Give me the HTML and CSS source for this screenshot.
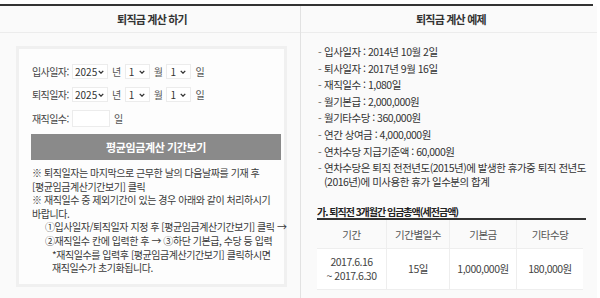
FILE: index.html
```html
<!DOCTYPE html>
<html lang="ko">
<head>
    <meta charset="UTF-8">
    <meta name="viewport" content="width=device-width, initial-scale=1.0">
    <title>퇴직금 계산</title>
    <link rel="stylesheet" href="styles.css">
</head>
<body>
    <div class="board">
        <section class="col col-left">
            <h2 class="col-head">퇴직금 계산 하기</h2>
            <div class="col-body">
                <div class="calc-box">
                    <div class="field-row">
                        <span class="label">입사일자:</span>
                        <span class="sel sel-year">2025<svg viewBox="0 0 8 5"><path d="M1 1l3 3 3-3"/></svg></span>
                        <span class="unit">년</span>
                        <span class="sel">1<svg viewBox="0 0 8 5"><path d="M1 1l3 3 3-3"/></svg></span>
                        <span class="unit">월</span>
                        <span class="sel">1<svg viewBox="0 0 8 5"><path d="M1 1l3 3 3-3"/></svg></span>
                        <span class="unit">일</span>
                    </div>
                    <div class="field-row">
                        <span class="label">퇴직일자:</span>
                        <span class="sel sel-year">2025<svg viewBox="0 0 8 5"><path d="M1 1l3 3 3-3"/></svg></span>
                        <span class="unit">년</span>
                        <span class="sel">1<svg viewBox="0 0 8 5"><path d="M1 1l3 3 3-3"/></svg></span>
                        <span class="unit">월</span>
                        <span class="sel">1<svg viewBox="0 0 8 5"><path d="M1 1l3 3 3-3"/></svg></span>
                        <span class="unit">일</span>
                    </div>
                    <div class="field-row">
                        <span class="label">재직일수:</span>
                        <input class="days-input" type="text">
                        <span class="unit">일</span>
                    </div>
                    <button class="period-btn">평균임금계산 기간보기</button>
                    <div class="notes">
                        <p>※ 퇴직일자는 마지막으로 근무한 날의 다음날짜를 기재 후<br>[평균임금계산기간보기] 클릭</p>
                        <p>※ 재직일수 중 제외기간이 있는 경우 아래와 같이 처리하시기<br>바랍니다.</p>
                        <p class="step">①입사일자/퇴직일자 지정 후 [평균임금계산기간보기] 클릭 →<br>②재직일수 칸에 입력한 후 → ③하단 기본급, 수당 등 입력</p>
                        <p class="star">*재직일수를 입력후 [평균임금계산기간보기] 클릭하시면<br>재직일수가 초기화됩니다.</p>
                    </div>
                </div>
            </div>
        </section>

        <section class="col col-right">
            <h2 class="col-head">퇴직금 계산 예제</h2>
            <div class="col-body">
                <ul class="example-list">
                    <li>입사일자 : 2014년 10월 2일</li>
                    <li>퇴사일자 : 2017년 9월 16일</li>
                    <li>재직일수 : 1,080일</li>
                    <li>월기본급 : 2,000,000원</li>
                    <li>월기타수당 : 360,000원</li>
                    <li>연간 상여금 : 4,000,000원</li>
                    <li>연차수당 지급기준액 : 60,000원</li>
                    <li>연차수당은 퇴직 전전년도(2015년)에 발생한 휴가중 퇴직 전년도<br>(2016년)에 미사용한 휴가 일수분의 합계</li>
                </ul>

                <h3 class="sub-title">가. 퇴직전 3개월간 임금총액(세전금액)</h3>
                <table class="wage-table">
                    <thead>
                        <tr>
                            <th>기간</th>
                            <th>기간별일수</th>
                            <th>기본금</th>
                            <th>기타수당</th>
                        </tr>
                    </thead>
                    <tbody>
                        <tr>
                            <td>2017.6.16<br>~ 2017.6.30</td>
                            <td>15일</td>
                            <td>1,000,000원</td>
                            <td>180,000원</td>
                        </tr>
                    </tbody>
                </table>
            </div>
        </section>
    </div>
</body>
</html>
```

FILE: styles.css
```css
body {
    margin: 0;
    background: #fff;
    font-family: "Noto Sans CJK KR", "Noto Sans", sans-serif;
    color: #333;
    font-size: 10.5px;
    letter-spacing: -0.5px;
    overflow: hidden;
}

.board {
    width: 593px;
    margin-top: 4px;
    border-top: 2px solid #333;
    display: grid;
    grid-template-columns: 301px 1fr;
    height: 300px;
}

.col {
    background: #fafafa;
}

.col-left {
    border-right: 1px solid #e2e2e2;
}

.col-head {
    margin: 0;
    height: 26px;
    line-height: 26px;
    text-align: center;
    font-size: 11px;
    font-weight: 700;
    letter-spacing: -0.8px;
    color: #333;
    border-bottom: 1px solid #ececec;
    padding-left: 4px;
}

/* left: calculator */
.col-left .col-body {
    padding: 13px 13px 0 16px;
}

.calc-box {
    border: 3px solid #f0f0f0;
    background: #fdfdfd;
    padding: 15px 2px 9px 13px;
}

.field-row {
    display: flex;
    align-items: center;
    height: 15px;
    margin-bottom: 8px;
    white-space: nowrap;
}

.field-row:nth-child(3) {
    height: 17px;
    margin-bottom: 7px;
}

.label {
    flex-shrink: 0;
    width: 40px;
    color: #444;
    font-size: 10px;
    letter-spacing: -0.6px;
}

.sel {
    display: flex;
    align-items: center;
    justify-content: space-between;
    box-sizing: border-box;
    width: 25px;
    height: 15px;
    padding: 0 4px 0 3px;
    border: 1px solid #ececec;
    background: #fff;
    color: #333;
    font-size: 10px;
    letter-spacing: 0;
}

.sel-year {
    width: 36px;
    padding-left: 2px;
    padding-right: 3px;
}

.sel svg {
    width: 6px;
    height: 4px;
    fill: none;
    stroke: #333;
    stroke-width: 1.8;
}

.unit {
    margin: 0 4px;
    color: #555;
    font-size: 10px;
}

.days-input {
    box-sizing: border-box;
    width: 38px;
    height: 17px;
    border: 1px solid #ececec;
    background: #fff;
    margin: 0;
    padding: 0;
}

.period-btn {
    display: block;
    width: 250px;
    height: 26px;
    margin-left: -1px;
    border: none;
    background: #8a8a8a;
    color: #fff;
    font-family: inherit;
    font-size: 11px;
    font-weight: 700;
    letter-spacing: -0.4px;
}

.notes {
    margin-top: 6px;
    line-height: 13.6px;
    color: #3a3a3a;
    font-size: 10px;
    letter-spacing: -0.45px;
}

.notes p {
    margin: 0;
    white-space: nowrap;
}

.notes .step {
    padding-left: 13px;
}

.notes .star {
    padding-left: 20px;
}

/* right: example */
.col-right .col-body {
    padding: 12px 11px 0 14px;
}

.example-list {
    list-style: none;
    margin: 0;
    padding: 0 0 0 9px;
    line-height: 14px;
    color: #333;
    white-space: nowrap;
}

.example-list li {
    position: relative;
    margin-bottom: 2.6px;
}

.example-list li::before {
    content: "-";
    position: absolute;
    left: -6px;
    color: #666;
}

.sub-title {
    margin: 17px 0 0 2px;
    font-size: 10px;
    font-weight: 700;
    line-height: 12px;
    letter-spacing: -1px;
    color: #222;
    border-bottom: 2px solid #333;
}

.wage-table {
    width: 266px;
    margin-left: 2px;
    border-collapse: collapse;
    table-layout: fixed;
}

.wage-table th,
.wage-table td {
    text-align: center;
    font-weight: 400;
    color: #444;
    border-left: 1px solid #eee;
    border-bottom: 1px solid #eee;
}

.wage-table th:first-child,
.wage-table td:first-child {
    border-left: none;
}

.wage-table th {
    height: 28px;
    padding: 0;
    color: #555;
}

.wage-table th:nth-child(1) { width: 69px; }
.wage-table th:nth-child(2) { width: 62px; }
.wage-table th:nth-child(3) { width: 66px; }

.wage-table td {
    height: 40px;
    padding: 0;
    line-height: 14px;
    background: #fff;
}
```
